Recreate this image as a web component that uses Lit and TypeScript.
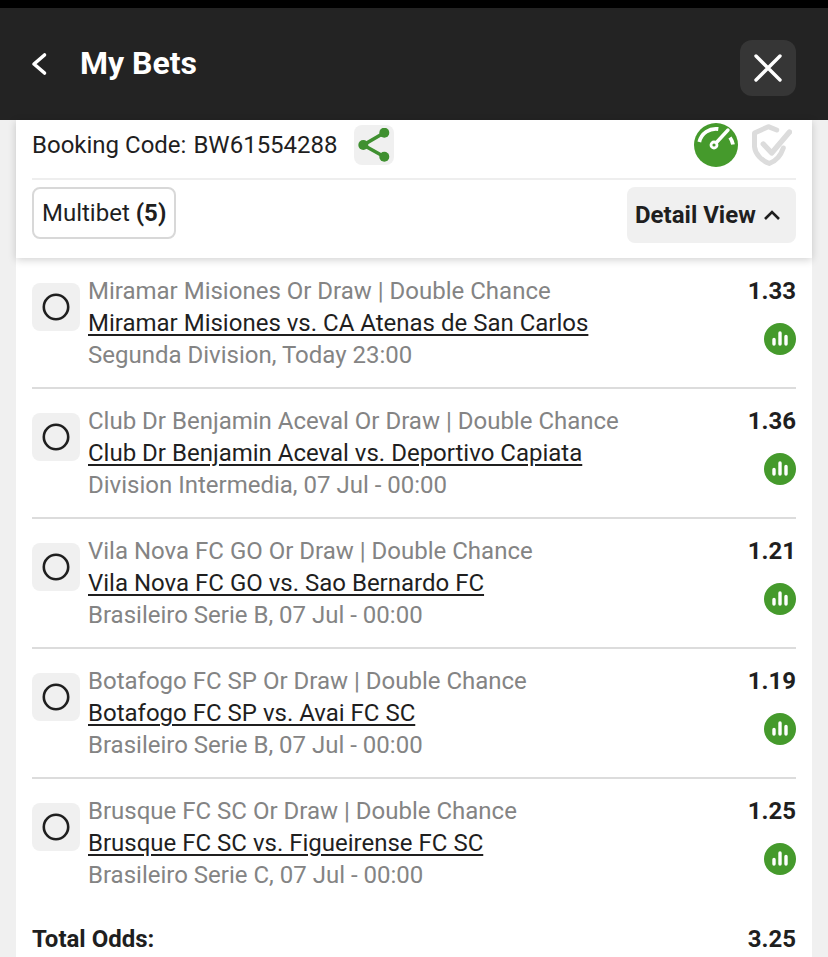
import { LitElement, html, css } from "lit";
import { customElement } from "lit/decorators.js";

const bets = [
  { pick: "Miramar Misiones Or Draw | Double Chance", match: "Miramar Misiones vs. CA Atenas de San Carlos", meta: "Segunda Division, Today 23:00", odds: "1.33" },
  { pick: "Club Dr Benjamin Aceval Or Draw | Double Chance", match: "Club Dr Benjamin Aceval vs. Deportivo Capiata", meta: "Division Intermedia, 07 Jul - 00:00", odds: "1.36" },
  { pick: "Vila Nova FC GO Or Draw | Double Chance", match: "Vila Nova FC GO vs. Sao Bernardo FC", meta: "Brasileiro Serie B, 07 Jul - 00:00", odds: "1.21" },
  { pick: "Botafogo FC SP Or Draw | Double Chance", match: "Botafogo FC SP vs. Avai FC SC", meta: "Brasileiro Serie B, 07 Jul - 00:00", odds: "1.19" },
  { pick: "Brusque FC SC Or Draw | Double Chance", match: "Brusque FC SC vs. Figueirense FC SC", meta: "Brasileiro Serie C, 07 Jul - 00:00", odds: "1.25" },
];

@customElement("app-root")
export class AppRoot extends LitElement {
  static styles = css`
    :host { display: block; height: 957px; overflow: hidden; background: #f0f0f0; font-family: Roboto, "Liberation Sans", sans-serif; color: #1f1f1f; font-size: 24px; }
    .header { border-top: 8px solid #000; height: 112px; background: #232323; color: #fff; display: flex; align-items: center; padding: 0 32px 0 28px; }
    .back { width: 24px; height: 24px; margin-right: 28px; }
    .title { font-size: 32px; font-weight: 700; flex: 1; margin-bottom: 3px; }
    .close { width: 56px; height: 56px; margin-top: 8px; border-radius: 12px; background: #363636; display: flex; align-items: center; justify-content: center; }
    .main { margin: 0 16px; background: #fff; }
    .top { padding: 0 16px; height: 138px; box-shadow: 0 2px 8px rgba(0,0,0,.18); position: relative; box-sizing: border-box; }
    .booking { height: 60px; box-sizing: border-box; display: flex; align-items: center; padding-bottom: 8px; border-bottom: 2px solid #eeeeee; }
    .code-label { margin-right: 7px; }
    .share { width: 40px; height: 40px; margin-left: 16px; border-radius: 8px; background: #f0f0f0; display: flex; align-items: center; justify-content: center; }
    .spacer { flex: 1; }
    .tools { display: flex; align-items: center; gap: 14px; margin-right: 4px; }
    .controls { display: flex; justify-content: space-between; padding-top: 7px; }
    .multibet { height: 52px; box-sizing: border-box; border: 2px solid #d8d8d8; border-radius: 8px; padding: 0 8px; display: flex; align-items: center; }
    b { font-weight: 700; }
    .detail { width: 169px; height: 56px; box-sizing: border-box; padding-left: 8px; background: #f0f0f0; border-radius: 8px; font-weight: 700; display: flex; align-items: center; gap: 8px; }
    .list { padding: 1px 16px 0; }
    .row { height: 130px; box-sizing: border-box; padding-top: 16px; border-bottom: 2px solid #dcdcdc; display: grid; grid-template-columns: 48px 1fr auto; column-gap: 8px; }
    .row:last-child { border-bottom: none; }
    .radio { margin-top: 8px; width: 48px; height: 48px; border-radius: 8px; background: #f0f0f0; display: flex; align-items: center; justify-content: center; }
    .line { line-height: 32px; height: 32px; white-space: nowrap; }
    .muted { color: #848484; }
    .match { text-decoration: underline; text-underline-offset: 3px; color: #1f1f1f; }
    .side { display: flex; flex-direction: column; align-items: flex-end; }
    .odds { line-height: 32px; font-weight: 700; }
    .stats { margin-top: 16px; width: 32px; height: 32px; border-radius: 50%; background: #459a2c; display: flex; align-items: center; justify-content: center; }
    .total { margin-top: 14px; padding: 0 16px 40px; display: flex; justify-content: space-between; font-weight: 700; line-height: 32px; }
    svg { display: block; }
  `;

  render() {
    return html`
      <div class="header">
        <svg class="back" viewBox="0 0 24 24" fill="none" stroke="#fff" stroke-width="3.6" stroke-linecap="round" stroke-linejoin="round"><path d="M16.5 3 L6 12 L16.5 21" /></svg>
        <div class="title">My Bets</div>
        <div class="close">
          <svg width="30" height="30" viewBox="0 0 30 30" stroke="#fff" stroke-width="3.4" stroke-linecap="round"><path d="M3 3 L27 27 M27 3 L3 27" /></svg>
        </div>
      </div>
      <div class="main">
        <div class="top">
          <div class="booking">
            <span class="code-label">Booking Code:</span><span>BW61554288</span>
            <div class="share">
              <svg width="34" height="34" viewBox="0 0 34 34" fill="#3f9030" stroke="#3f9030" stroke-width="0"><path d="M27.3 4.7 L6.3 17 L27.3 28.7" fill="none" stroke-width="3.6" /><circle cx="27.3" cy="4.7" r="5" /><circle cx="6.3" cy="17" r="5" /><circle cx="27.3" cy="28.7" r="5" /></svg>
            </div>
            <div class="spacer"></div>
            <div class="tools">
              <svg width="44" height="44" viewBox="0 0 44 44">
                <circle cx="22" cy="22" r="22" fill="#459a2c" />
                <path d="M5.3 19 A 17 17 0 0 1 24.3 6" fill="none" stroke="#fff" stroke-width="3.8" />
                <path d="M36 14.5 A 17 17 0 0 1 39 21.5" fill="none" stroke="#fff" stroke-width="3.8" />
                <path d="M22 20 L34 7" stroke="#fff" stroke-width="3.4" stroke-linecap="round" />
                <circle cx="20" cy="22" r="3" fill="#459a2c" stroke="#fff" stroke-width="2.8" />
              </svg>
              <svg width="40" height="42" viewBox="0 0 40 42" fill="none" stroke="#dcdcdc" stroke-width="5" stroke-linejoin="round" stroke-linecap="round">
                <path d="M24.7 6 L16.3 2.7 L2.5 9 V22.7 C3 30 10 37 17.3 39.5 C24 37 29 31 31.3 24" />
                <path d="M11.3 20 L19.7 29 L37.5 8" stroke-width="5.4" />
              </svg>
            </div>
          </div>
          <div class="controls">
            <div class="multibet"><span>Multibet&nbsp;<b>(5)</b></span></div>
            <div class="detail">
              <span>Detail View</span>
              <svg width="16" height="16" viewBox="0 0 16 16" fill="none" stroke="#1f1f1f" stroke-width="2.6"><path d="M1 12 L8 5 L15 12" /></svg>
            </div>
          </div>
        </div>
        <div class="list">
          ${bets.map(b => html`
            <div class="row">
              <div class="radio">
                <svg width="28" height="28" viewBox="0 0 28 28" fill="none" stroke="#1f1f1f" stroke-width="2.6"><circle cx="14" cy="14" r="12.2" /></svg>
              </div>
              <div>
                <div class="line muted">${b.pick}</div>
                <div class="line match">${b.match}</div>
                <div class="line muted">${b.meta}</div>
              </div>
              <div class="side">
                <div class="odds">${b.odds}</div>
                <div class="stats">
                  <svg width="18" height="18" viewBox="0 0 18 18" stroke="#fff" stroke-linecap="round" stroke-width="3.4"><path d="M3 9.5 V14 M9 3 V14 M15 6.5 V14" /></svg>
                </div>
              </div>
            </div>
          `)}
        </div>
        <div class="total"><span>Total Odds:</span><span>3.25</span></div>
      </div>
    `;
  }
}
